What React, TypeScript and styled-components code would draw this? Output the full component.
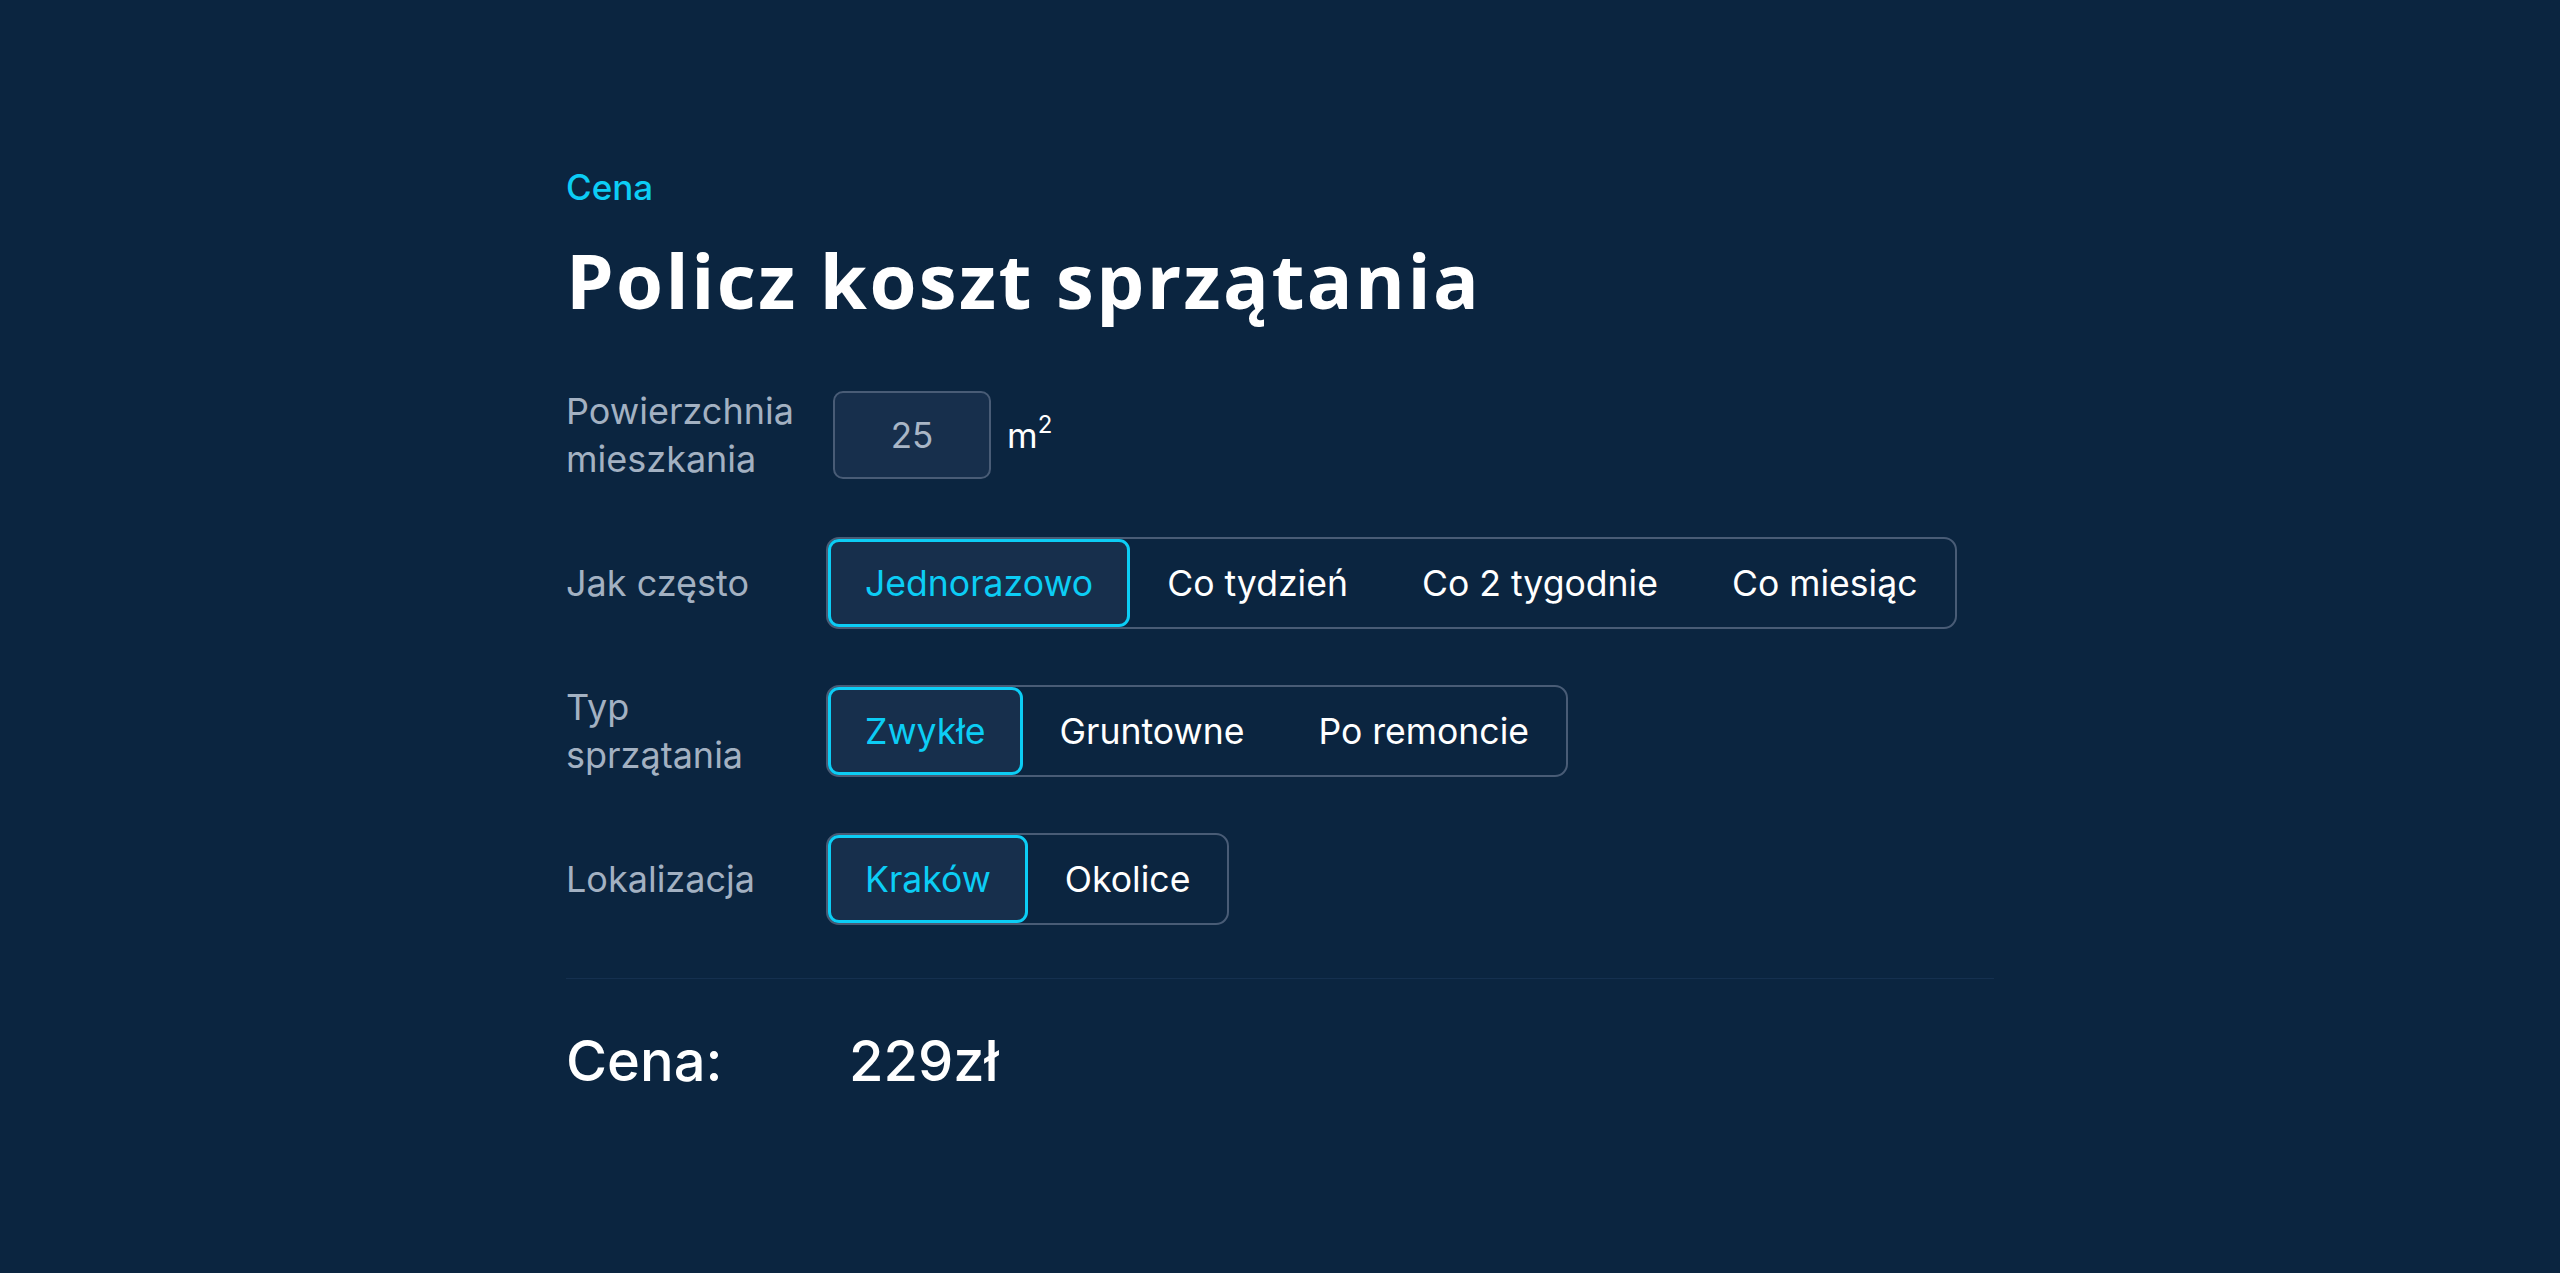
import { useState } from 'react';
import styled, { createGlobalStyle } from 'styled-components';

const GlobalStyle = createGlobalStyle`
    html, body {
        margin: 0;
        padding: 0;
        background: #0b2540;
    }

    body {
        font-family: Inter, "Noto Sans", sans-serif;
        -webkit-font-smoothing: antialiased;
    }
`;

const Page = styled.main`
    min-height: 100vh;
    background: #0b2540;
    padding-top: 167px;
    box-sizing: border-box;
`;

const Container = styled.section`
    width: 1428px;
    margin: 0 auto;
`;

const Eyebrow = styled.div`
    font-size: 35px;
    line-height: 40px;
    font-weight: 500;
    color: #0ccdf5;
`;

const Title = styled.h1`
    margin: 27px 0 0;
    font-family: "Open Sans", "Noto Sans", sans-serif;
    font-size: 76px;
    line-height: 91px;
    font-weight: 700;
    color: #ffffff;
    letter-spacing: 2.4px;
`;

const Form = styled.div`
    display: flex;
    flex-direction: column;
    gap: 54px;
    margin-top: 62px;
`;

const Row = styled.div`
    display: flex;
    align-items: center;
`;

const Label = styled.div`
    width: 260px;
    flex-shrink: 0;
    font-size: 36px;
    line-height: 48px;
    color: #a3b1c2;
`;

const InputWrap = styled.div`
    display: flex;
    align-items: center;
    gap: 16px;
    margin-left: 7px;
`;

const NumberInput = styled.input`
    width: 158px;
    height: 88px;
    box-sizing: border-box;
    border: 2px solid #495c76;
    border-radius: 10px;
    background: #172f4c;
    color: #a9b6c6;
    font-family: Inter, sans-serif;
    font-size: 35px;
    text-align: center;
    outline: none;
`;

const Unit = styled.span`
    font-size: 35px;
    color: #ffffff;

    sup {
        font-size: 24px;
        line-height: 0;
        vertical-align: 15px;
    }
`;

const Group = styled.div`
    display: inline-flex;
    border: 2px solid #495c76;
    border-radius: 13px;
`;

const Option = styled.button<{ $active: boolean }>`
    height: 88px;
    padding: 0 34px;
    border: 3px solid ${(p) => (p.$active ? '#0ccdf5' : 'transparent')};
    border-radius: 11px;
    background: ${(p) => (p.$active ? '#172f4c' : 'transparent')};
    color: ${(p) => (p.$active ? '#0ccdf5' : '#ffffff')};
    font-family: Inter, sans-serif;
    font-size: 35.6px;
    cursor: pointer;
    white-space: nowrap;
`;

const Divider = styled.hr`
    margin: 53px 0 0;
    border: 0;
    height: 1px;
    background: #15304f;
`;

const PriceRow = styled.div`
    display: flex;
    align-items: baseline;
    margin-top: 49px;
    font-size: 56px;
    line-height: 67px;
    font-weight: 500;
    color: #ffffff;
`;

const PriceLabel = styled.span`
    width: 283px;
`;

interface SegmentedProps {
    options: string[]
}

const Segmented = ({ options }: SegmentedProps) => {
    const [selected, setSelected] = useState(0);
    return (
        <Group>
            {options.map((o, i) => (
                <Option key={o} $active={i === selected} onClick={() => setSelected(i)}>
                    {o}
                </Option>
            ))}
        </Group>
    );
};

const App = () => (
    <Page>
        <GlobalStyle />
        <Container>
            <Eyebrow>Cena</Eyebrow>
            <Title>Policz koszt sprzątania</Title>
            <Form>
                <Row>
                    <Label>Powierzchnia<br />mieszkania</Label>
                    <InputWrap>
                        <NumberInput defaultValue="25" />
                        <Unit>m<sup>2</sup></Unit>
                    </InputWrap>
                </Row>
                <Row>
                    <Label>Jak często</Label>
                    <Segmented options={['Jednorazowo', 'Co tydzień', 'Co 2 tygodnie', 'Co miesiąc']} />
                </Row>
                <Row>
                    <Label>Typ<br />sprzątania</Label>
                    <Segmented options={['Zwykłe', 'Gruntowne', 'Po remoncie']} />
                </Row>
                <Row>
                    <Label>Lokalizacja</Label>
                    <Segmented options={['Kraków', 'Okolice']} />
                </Row>
            </Form>
            <Divider />
            <PriceRow>
                <PriceLabel>Cena:</PriceLabel>
                <span>229zł</span>
            </PriceRow>
        </Container>
    </Page>
);

export default App;
